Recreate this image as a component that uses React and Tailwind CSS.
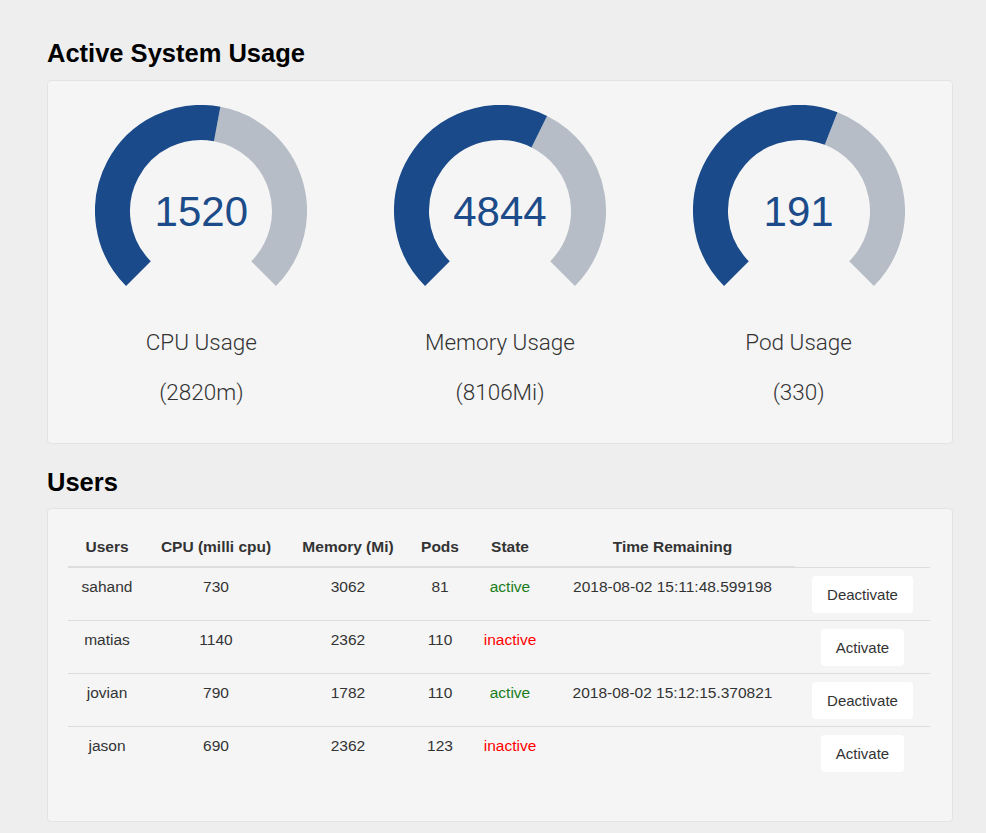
import React from 'react'

const GAUGES = [
  { value: 1520, total: 2820, label: 'CPU Usage', unit: 'm' },
  { value: 4844, total: 8106, label: 'Memory Usage', unit: 'Mi' },
  { value: 191, total: 330, label: 'Pod Usage', unit: '' },
]

const USERS = [
  { name: 'sahand', cpu: 730, mem: 3062, pods: 81, active: true, time: '2018-08-02 15:11:48.599198' },
  { name: 'matias', cpu: 1140, mem: 2362, pods: 110, active: false, time: '' },
  { name: 'jovian', cpu: 790, mem: 1782, pods: 110, active: true, time: '2018-08-02 15:12:15.370821' },
  { name: 'jason', cpu: 690, mem: 2362, pods: 123, active: false, time: '' },
]

const font = { fontFamily: '"Liberation Sans", Arial, sans-serif' }
const lightFont = { fontFamily: 'Roboto, "Liberation Sans", sans-serif' }

// angle in degrees, clockwise from 12 o'clock
const polar = (cx, cy, r, deg) => {
  const a = (deg * Math.PI) / 180
  return [cx + r * Math.sin(a), cy - r * Math.cos(a)]
}

const arcPath = (cx, cy, r, a0, a1) => {
  const [x0, y0] = polar(cx, cy, r, a0)
  const [x1, y1] = polar(cx, cy, r, a1)
  const large = a1 - a0 > 180 ? 1 : 0
  return `M ${x0} ${y0} A ${r} ${r} 0 ${large} 1 ${x1} ${y1}`
}

const Gauge = ({ value, total, label, unit }) => {
  const cx = 106
  const cy = 106
  const r = 88.5
  const split = -135 + (value / total) * 270
  return (
    <div className="flex flex-col items-center">
      <div className="relative w-[212px] h-[184px]">
        <svg width="212" height="184" viewBox="0 0 212 184">
          <path d={arcPath(cx, cy, r, split, 135)} fill="none" stroke="#b6bdc6" strokeWidth="35" />
          <path d={arcPath(cx, cy, r, -135, split)} fill="none" stroke="#1a4a89" strokeWidth="35" />
        </svg>
        <div className="absolute left-0 right-0 top-[83px] text-center text-[42px] leading-[48px] text-[#1c4b8a]" style={font}>
          {value}
        </div>
      </div>
      <div className="mt-[38px] text-[22.5px] leading-[30px] font-light text-[#333]" style={lightFont}>
        {label}
      </div>
      <div className="mt-[20px] text-[22.5px] leading-[30px] font-light text-[#333]" style={lightFont}>
        ({total}{unit})
      </div>
    </div>
  )
}

export default function App() {
  return (
    <div className="min-h-screen bg-[#eeeeee] pl-[47px] pt-[38px]" style={font}>
      <div className="w-[906px]">
        <h2 className="text-[25.5px] leading-[30px] font-bold text-black">Active System Usage</h2>
        <div className="mt-[12px] rounded border border-[#e3e3e3] bg-[#f5f5f5] px-[4px] pt-[24px] pb-[36px]">
          <div className="grid grid-cols-3">
            {GAUGES.map((g) => (
              <Gauge key={g.label} {...g} />
            ))}
          </div>
        </div>

        <h2 className="mt-[23px] text-[25.5px] leading-[30px] font-bold text-black">Users</h2>
        <div className="mt-[11px] rounded border border-[#e3e3e3] bg-[#f5f5f5] pl-[20px] pt-[19px] pb-[42px]">
          <table className="w-[862px] table-fixed border-collapse text-[15.5px] text-[#333]">
            <colgroup>
              <col className="w-[78px]" />
              <col className="w-[140px]" />
              <col className="w-[124px]" />
              <col className="w-[60px]" />
              <col className="w-[80px]" />
              <col className="w-[245px]" />
              <col className="w-[135px]" />
            </colgroup>
            <thead>
              <tr>
                {['Users', 'CPU (milli cpu)', 'Memory (Mi)', 'Pods', 'State', 'Time Remaining'].map((h) => (
                  <th key={h} className="py-[8px] leading-[22px] font-bold text-center border-b-2 border-[#dddddd]">
                    {h}
                  </th>
                ))}
              </tr>
            </thead>
            <tbody>
              {USERS.map((u) => (
                <tr key={u.name}>
                  <td className="py-[8px] leading-[22px] text-center align-top border-t border-[#dddddd]">{u.name}</td>
                  <td className="py-[8px] leading-[22px] text-center align-top border-t border-[#dddddd]">{u.cpu}</td>
                  <td className="py-[8px] leading-[22px] text-center align-top border-t border-[#dddddd]">{u.mem}</td>
                  <td className="py-[8px] leading-[22px] text-center align-top border-t border-[#dddddd]">{u.pods}</td>
                  <td className={`py-[8px] leading-[22px] text-center align-top border-t border-[#dddddd] ${u.active ? 'text-[#1a7d1a]' : 'text-[#ff0000]'}`}>
                    {u.active ? 'active' : 'inactive'}
                  </td>
                  <td className="py-[8px] leading-[22px] text-center align-top border-t border-[#dddddd]">{u.time}</td>
                  <td className="pt-[8px] pb-[7px] text-center align-top border-t border-[#dddddd]">
                    <button className="rounded bg-white px-[15px] py-[8px] text-[15px] leading-[21px] text-[#333]">
                      {u.active ? 'Deactivate' : 'Activate'}
                    </button>
                  </td>
                </tr>
              ))}
            </tbody>
          </table>
        </div>
      </div>
    </div>
  )
}
